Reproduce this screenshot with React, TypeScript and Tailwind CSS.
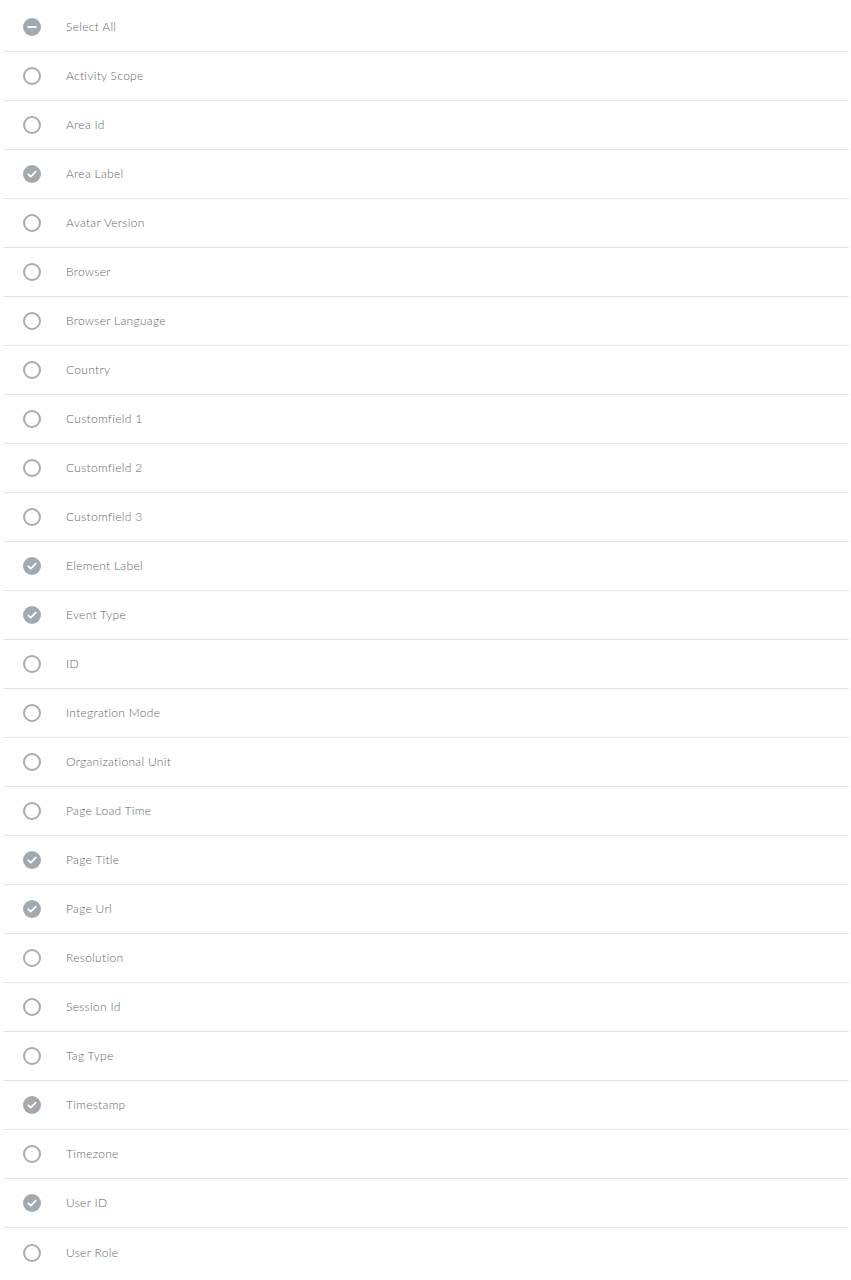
const fields = [
  { label: 'Activity Scope', on: false },
  { label: 'Area Id', on: false },
  { label: 'Area Label', on: true },
  { label: 'Avatar Version', on: false },
  { label: 'Browser', on: false },
  { label: 'Browser Language', on: false },
  { label: 'Country', on: false },
  { label: 'Customfield 1', on: false },
  { label: 'Customfield 2', on: false },
  { label: 'Customfield 3', on: false },
  { label: 'Element Label', on: true },
  { label: 'Event Type', on: true },
  { label: 'ID', on: false },
  { label: 'Integration Mode', on: false },
  { label: 'Organizational Unit', on: false },
  { label: 'Page Load Time', on: false },
  { label: 'Page Title', on: true },
  { label: 'Page Url', on: true },
  { label: 'Resolution', on: false },
  { label: 'Session Id', on: false },
  { label: 'Tag Type', on: false },
  { label: 'Timestamp', on: true },
  { label: 'Timezone', on: false },
  { label: 'User ID', on: true },
  { label: 'User Role', on: false },
];

const Mark = ({ state }: { state: 'off' | 'on' | 'some' }) => {
  if (state === 'off') {
    return <span className="block w-[18px] h-[18px] rounded-full border-2 border-[#a7adb1]" />;
  }
  return (
    <svg width="18" height="18" viewBox="0 0 18 18">
      <circle cx="9" cy="9" r="9" fill="#a3a9ad" />
      {state === 'on' ? (
        <path d="M5.3 9.3l2.5 2.4 4.9-5" fill="none" stroke="#fff" strokeWidth="1.8" strokeLinecap="round" strokeLinejoin="round" />
      ) : (
        <path d="M5.3 9h7.4" stroke="#fff" strokeWidth="2" strokeLinecap="round" />
      )}
    </svg>
  );
};

const Row = ({ label, state, last }: { label: string; state: 'off' | 'on' | 'some'; last?: boolean }) => (
  <div className={`flex items-center h-[49px] ${last ? '' : 'border-b border-[#e3e3e3]'}`}>
    <div className="w-[62px] pl-[19px] flex items-center">
      <Mark state={state} />
    </div>
    <span className="text-[12px] font-light text-[#5f676c] tracking-[0.3px]">{label}</span>
  </div>
);

export default function App() {
  return (
    <div className="bg-white min-h-screen pl-[4px] pr-[2px] pt-[3px] font-['Lato',sans-serif]">
      <Row label="Select All" state="some" />
      {fields.map((f, i) => (
        <Row key={f.label} label={f.label} state={f.on ? 'on' : 'off'} last={i === fields.length - 1} />
      ))}
    </div>
  );
}
